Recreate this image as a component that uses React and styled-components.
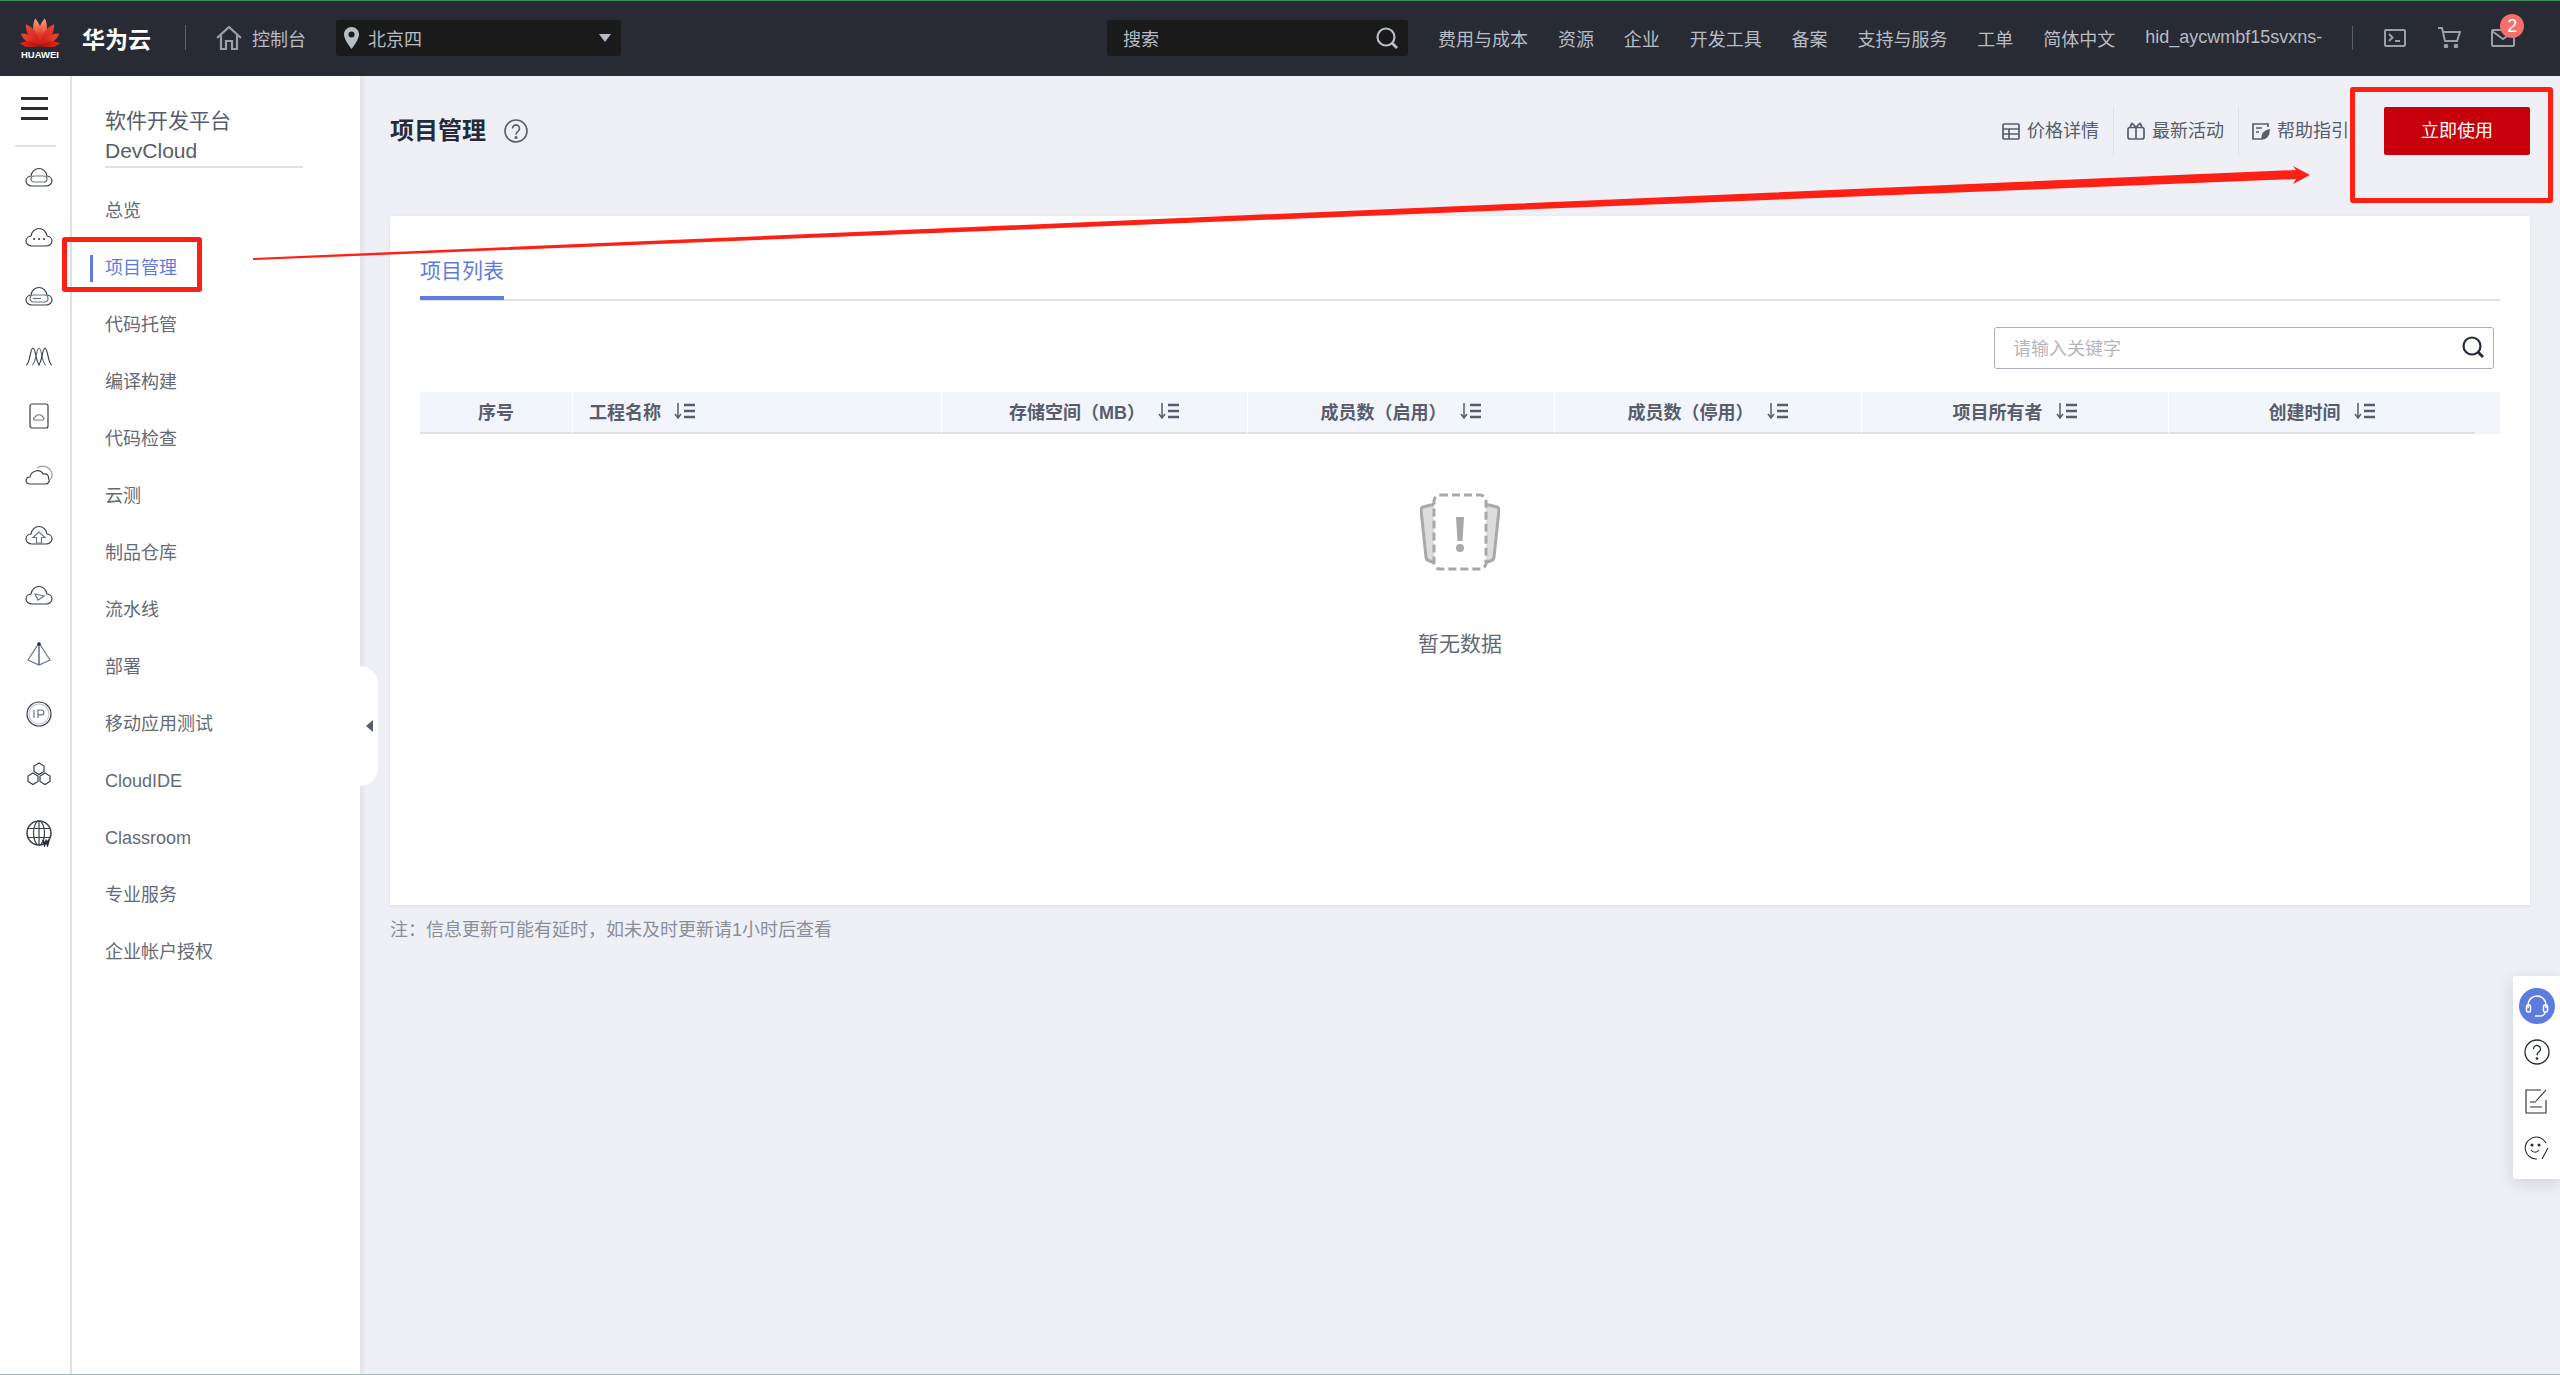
import React from "react";
import styled, { createGlobalStyle } from "styled-components";

const Global = createGlobalStyle`
  html, body { margin: 0; padding: 0; }
  body {
    font-family: "Liberation Sans", "Noto Sans CJK SC", sans-serif;
    font-size: 18px;
    color: #575d6c;
    background: #eef0f5;
    overflow: hidden;
  }
  * { box-sizing: border-box; }
`;

const Page = styled.div`
  position: relative;
  width: 2560px;
  height: 1375px;
  display: flex;
  flex-direction: column;
  overflow: hidden;
  border-bottom: 1px solid #a9b6bc;
`;

/* ---------- top bar ---------- */
const TopBar = styled.header`
  flex: none;
  height: 76px;
  display: flex;
  align-items: center;
  background: #282b33;
  border-top: 1px solid #3d8a5c;
  padding: 0 0 2px 20px;
  color: #b8bcc4;
`;
const LogoBox = styled.div`
  width: 40px;
  display: flex;
  flex-direction: column;
  align-items: center;
  margin-top: 2px;
`;
const LogoWord = styled.span`
  color: #fff;
  font-size: 9.5px;
  font-weight: 700;
  line-height: 10px;
  margin-top: 3px;
`;
const Brand = styled.span`
  margin-left: 22px;
  width: 101px;
  color: #fff;
  font-size: 23px;
  font-weight: 700;
`;
const VLine = styled.i`
  display: block;
  width: 1px;
  height: ${(p) => p.$h || 24}px;
  background: ${(p) => p.$c || "#5a5e68"};
  margin-left: ${(p) => p.$ml || 0}px;
`;
const HomeLink = styled.div`
  display: flex;
  align-items: center;
  margin-left: 30px;
  gap: 10px;
  font-size: 18px;
`;
const DarkField = styled.div`
  height: 36px;
  width: ${(p) => p.$w}px;
  margin-left: ${(p) => p.$ml}px;
  display: flex;
  align-items: center;
  background: #1a1a1a;
  border-radius: 3px;
  padding: 0 ${(p) => p.$pr ?? 8}px 0 ${(p) => p.$pl}px;
  font-size: 18px;
`;
const FieldText = styled.span`
  flex: 1;
  margin-left: ${(p) => p.$ml || 0}px;
`;
const Caret = styled.i`
  width: 0;
  height: 0;
  margin-right: 2px;
  border-left: 6px solid transparent;
  border-right: 6px solid transparent;
  border-top: 8px solid #b8bcc4;
`;
const TopNav = styled.nav`
  display: flex;
  align-items: center;
  gap: 29.9px;
  margin-left: 30px;
  font-size: 18px;
  white-space: nowrap;
`;
const TopIcons = styled.div`
  display: flex;
  align-items: center;
  margin-left: 30px;
`;
const TopIcon = styled.span`
  position: relative;
  display: flex;
  margin-left: ${(p) => p.$ml}px;
`;
const Badge = styled.b`
  position: absolute;
  left: 9px;
  top: -15px;
  width: 24px;
  height: 24px;
  border-radius: 50%;
  background: #f66f6a;
  color: #fff;
  font-size: 18px;
  font-weight: 400;
  line-height: 24px;
  text-align: center;
`;

/* ---------- body ---------- */
const Body = styled.div`
  flex: 1;
  display: flex;
  min-height: 0;
`;
const Rail = styled.aside`
  flex: none;
  width: 72px;
  background: #fff;
  border-right: 2px solid #dfe1e6;
  display: flex;
  flex-direction: column;
  padding-top: 21px;
`;
const Burger = styled.div`
  width: 27px;
  height: 23px;
  margin-left: 21px;
  border-top: 3px solid #282b33;
  border-bottom: 3px solid #282b33;
  position: relative;
  &::after {
    content: "";
    position: absolute;
    left: 0;
    right: 0;
    top: 7px;
    height: 3px;
    background: #282b33;
  }
`;
const RailRule = styled.div`
  width: 41px;
  height: 2px;
  margin: 25px 0 0 15px;
  background: #dfe1e6;
`;
const RailCell = styled.div`
  height: 59.7px;
  display: flex;
  align-items: center;
  justify-content: center;
  padding-left: 8px;
`;

const Panel = styled.aside`
  position: relative;
  flex: none;
  width: 288px;
  background: #fff;
  padding: 30px 0 0 33px;
  box-shadow: 3px 0 5px rgba(37, 43, 58, 0.07);
`;
const PanelTitle = styled.div`
  width: 198px;
  height: 62px;
  border-bottom: 2px solid #dfe1e6;
  color: #575d6c;
  font-size: 21px;
  line-height: 30px;
  margin-bottom: 15px;
`;
const SideItem = styled.div`
  position: relative;
  height: 57px;
  line-height: 57px;
  font-size: 18px;
  color: ${(p) => (p.$active ? "#5e7ce0" : "#666a75")};
  &::before {
    content: ${(p) => (p.$active ? '""' : "none")};
    position: absolute;
    left: -15px;
    top: 15px;
    width: 3px;
    height: 27px;
    background: #5e7ce0;
  }
`;
const Toggle = styled.div`
  position: absolute;
  right: -18px;
  top: 590px;
  width: 18px;
  height: 120px;
  background: #fff;
  border-radius: 0 18px 18px 0;
  display: flex;
  align-items: center;
  padding-left: 6px;
  &::before {
    content: "";
    border-top: 6px solid transparent;
    border-bottom: 6px solid transparent;
    border-right: 7px solid #575d6c;
  }
`;

const Main = styled.main`
  flex: 1;
  min-width: 0;
  padding: 0 30px;
`;
const TitleRow = styled.div`
  height: 140px;
  display: flex;
  align-items: flex-start;
  padding-top: 30px;
`;
const PageTitle = styled.h1`
  margin: 1px 0 0;
  height: 48px;
  line-height: 48px;
  font-size: 24px;
  font-weight: 700;
  color: #252b3a;
`;
const HelpIcon = styled.span`
  display: flex;
  margin: 13px 0 0 18px;
`;
const Links = styled.div`
  margin-left: auto;
  display: flex;
  align-items: center;
  height: 50px;
`;
const LinkItem = styled.div`
  display: flex;
  align-items: center;
  gap: 6px;
  height: 50px;
  padding: 0 ${(p) => p.$pr ?? 14}px 0 12px;
  font-size: 18px;
  line-height: 24px;
  color: #575d6c;
  white-space: nowrap;
  border-right: ${(p) => (p.$last ? "none" : "1px solid #dfe1e6")};
`;
const UseButton = styled.div`
  width: 146px;
  height: 48px;
  margin-left: 35px;
  background: #c7000b;
  border-radius: 2px;
  color: #fff;
  font-size: 18px;
  line-height: 48px;
  text-align: center;
`;

const Card = styled.section`
  height: 689px;
  background: #fff;
  padding: 28px 30px 0;
  box-shadow: 0 1px 3px rgba(37, 43, 58, 0.08);
`;
const Tabs = styled.div`
  height: 57px;
  border-bottom: 2px solid #dfe1e6;
`;
const Tab = styled.div`
  display: inline-block;
  height: 56px;
  padding-top: 9px;
  border-bottom: 4px solid #5e7ce0;
  color: #5e7ce0;
  font-size: 21px;
  line-height: 36px;
`;
const SearchRow = styled.div`
  display: flex;
  justify-content: flex-end;
  padding: 26px 6px 23px 0;
`;
const SearchBox = styled.div`
  width: 500px;
  height: 42px;
  display: flex;
  align-items: center;
  justify-content: space-between;
  padding: 0 9px 2px 18px;
  border: 1px solid #adb0b8;
  border-radius: 3px;
  color: #b4b6bd;
  font-size: 18px;
`;
const TableHead = styled.div`
  display: grid;
  grid-template-columns: 152px 369px 306px 307px 307px 307px 307px 25px;
  height: 42px;
  background: #f2f5fc;
`;
const HeadCell = styled.div`
  display: flex;
  align-items: center;
  justify-content: ${(p) => (p.$left ? "flex-start" : "center")};
  gap: 13px;
  padding-left: ${(p) => (p.$left ? 16 : 0)}px;
  padding-bottom: 2px;
  border-bottom: 2px solid #dfe1e6;
  border-left: ${(p) => (p.$first ? "none" : "1px solid #fff")};
  color: #575d6c;
  font-size: 18px;
  font-weight: 700;
  white-space: nowrap;
`;
const Gutter = styled.div``;
const Empty = styled.div`
  display: flex;
  flex-direction: column;
  align-items: center;
  padding-top: 59px;
`;
const EmptyText = styled.div`
  margin-top: 58px;
  color: #666a75;
  font-size: 21px;
  line-height: 30px;
`;
const Note = styled.p`
  margin: 13px 0 0;
  color: #8a8e99;
  font-size: 18px;
  line-height: 24px;
`;

/* ---------- things lying over the page ---------- */
const FloatBar = styled.div`
  position: absolute;
  right: 0;
  top: 976px;
  width: 47px;
  height: 203px;
  background: #fff;
  border-radius: 3px 0 0 3px;
  box-shadow: 0 4px 16px rgba(37, 43, 58, 0.15);
  display: flex;
  flex-direction: column;
  align-items: center;
  padding: 12px 0 0 1px;
`;
const FloatCell = styled.div`
  height: ${(p) => p.$h}px;
  display: flex;
  align-items: center;
  justify-content: center;
`;
const HeadsetDot = styled.span`
  width: 36px;
  height: 36px;
  border-radius: 50%;
  background: #5e7ce0;
  display: flex;
  align-items: center;
  justify-content: center;
`;
const RedBox = styled.div`
  position: absolute;
  left: ${(p) => p.$x}px;
  top: ${(p) => p.$y}px;
  width: ${(p) => p.$w}px;
  height: ${(p) => p.$h}px;
  border: 5px solid #fe2015;
  border-radius: 3px;
  pointer-events: none;
`;
const ArrowLayer = styled.svg`
  position: absolute;
  left: 0;
  top: 0;
  pointer-events: none;
`;

/* ---------- drawings ---------- */
const HuaweiLogo = () => {
  const petals = [
    { a: 10, l: 28, w: 5.4, c: "url(#hwTop)" },
    { a: 33, l: 26, w: 5.2, c: "url(#hwMid)" },
    { a: 57, l: 23, w: 4.8, c: "url(#hwMid)" },
    { a: 82, l: 20, w: 4, c: "url(#hwLow)" },
  ];
  return (
    <svg width="40" height="30" viewBox="-20 -29 40 30">
      <defs>
        <linearGradient id="hwTop" x1="0" y1="0" x2="0" y2="1">
          <stop offset="0" stopColor="#f6a888" />
          <stop offset="0.6" stopColor="#e8392a" />
          <stop offset="1" stopColor="#c8170f" />
        </linearGradient>
        <linearGradient id="hwMid" x1="0" y1="0" x2="0" y2="1">
          <stop offset="0" stopColor="#ee4a34" />
          <stop offset="1" stopColor="#c8170f" />
        </linearGradient>
        <linearGradient id="hwLow" x1="0" y1="0" x2="0" y2="1">
          <stop offset="0" stopColor="#e5281e" />
          <stop offset="1" stopColor="#a5130e" />
        </linearGradient>
      </defs>
      {[1, -1].map((side) =>
        petals.map((p) => (
          <path
            key={`${side}${p.a}`}
            d={`M0 0 C${-p.w} ${-p.l * 0.35} ${-p.w} ${-p.l * 0.72} 0 ${-p.l} C${p.w} ${-p.l * 0.72} ${p.w} ${-p.l * 0.35} 0 0Z`}
            fill={p.c}
            transform={`rotate(${side * p.a})`}
          />
        ))
      )}
    </svg>
  );
};

const CLOUD = "M7 21C3.6 21 1 18.8 1 16c0-2.700 2.200-4.800 5-5 .6-4.400 4-7.500 8-7.500s7.400 3.100 8 7.500c2.800.2 5 2.300 5 5 0 2.800-2.600 5-6 5H7Z";

const RailIcon = ({ children, w = 28, h = 24 }) => (
  <svg width={w} height={h} viewBox={`0 0 ${w} ${h}`} fill="none" stroke="#3a3f4c" strokeWidth="1.2">
    {children}
  </svg>
);

const railIcons = [
  <RailIcon key="1"><path d={CLOUD} /><rect x="6" y="11" width="16" height="6" rx="3" stroke="#6d7486" /></RailIcon>,
  <RailIcon key="2"><path d={CLOUD} /><path d="M9 14h.1M14 14h.1M19 14h.1" strokeWidth="2" strokeLinecap="round" /></RailIcon>,
  <RailIcon key="3"><path d={CLOUD} /><rect x="5" y="11" width="18" height="7" rx="3.500" stroke="#6d7486" /><path d="M8 14.500h8" stroke="#6d7486" /></RailIcon>,
  <RailIcon key="4"><path d="M1 21C5 21 5 4 8 4s3 17 7 17" /><path d="M7 21c4 0 4-17 7-17s3 17 7 17" stroke="#6d7486" /><path d="M13 21c4 0 4-17 7-17s3 17 7 17" /></RailIcon>,
  <RailIcon key="5" h={28}><rect x="5" y="2" width="18" height="24" rx="2" /><path d="M10 18c-2 0-2-3 .5-3 .5-3 6.500-3 7 0 2 0 2 3 0 3h-7.500Z" stroke="#6d7486" /></RailIcon>,
  <RailIcon key="6"><path d="M5 21c-5.500 0-5-7 0-7 1-6 10-9 13-3 4-1 6 2 5.500 4.500 2 3-.5 5.500-3 5.500H5Z" /><path d="M12 5c5-4 14-1 15 6 .5 3-1 5-3 6" stroke="#9aa0ad" /></RailIcon>,
  <RailIcon key="7"><path d={CLOUD} /><path d="M14 9l-6 5.500h3.500V20h5v-5.500H20L14 9Z" stroke="#6d7486" /></RailIcon>,
  <RailIcon key="8"><path d={CLOUD} /><path d="M10 11l9 2-6 4-3-6Z" stroke="#6d7486" /></RailIcon>,
  <RailIcon key="9" h={26}><path d="M14 2 3 19l11 5 11-5L14 2Z" stroke="#6d7486" /><path d="M14 3v21" stroke="#56627e" strokeWidth="1.400" /><circle cx="14" cy="3" r="1.800" fill="#252b3a" stroke="none" /></RailIcon>,
  <RailIcon key="10" h={26}><circle cx="14" cy="13" r="12" /><circle cx="14" cy="13" r="10" stroke="#c2c6d0" /><path d="M9 9v8M13 17V9h3.500a2.300 2.300 0 0 1 0 4.800H13" stroke="#6d7486" /></RailIcon>,
  <RailIcon key="11" h={26}><path d="M14 2l5 3v5.500l-5 3-5-3V5l5-3ZM8 12l5 3v5.500l-5 3-5-3V15l5-3ZM20 12l5 3v5.500l-5 3-5-3V15l5-3Z" /></RailIcon>,
  <RailIcon key="12" h={28}><circle cx="14" cy="14" r="12" strokeWidth="1.500" /><ellipse cx="14" cy="14" rx="5.500" ry="12" /><path d="M3 9.500h22M3 18.500h22M14 2v24" /><path d="M18 21l1.500 5 1.500-4 1.500 4 1.500-5" stroke="#252b3a" strokeWidth="1.800" /></RailIcon>,
];

const SortIcon = () => (
  <svg width="22" height="18" viewBox="0 0 22 18" fill="none" stroke="#575d6c" strokeWidth="2.600">
    <path d="M4 1v15M1 12l3 4 3-4" strokeWidth="1.500" />
    <path d="M10 3h11M10 9h11M10 15h11" />
  </svg>
);

const SearchGlyph = ({ size = 22, color = "#252b3a" }) => (
  <svg width={size} height={size} viewBox="0 0 22 22" fill="none" stroke={color} strokeWidth="2.200">
    <circle cx="10" cy="10" r="8.500" />
    <path d="M16 16l5 5" strokeWidth="2.800" />
  </svg>
);

const EmptyIcon = () => (
  <svg width="80" height="78" viewBox="0 0 80 78" fill="none">
    <path d="M15 11 3 14c-1 .3-2 1.500-2 3l5 47c.2 2 1.500 3.500 3.500 4L15 70" fill="#dcdcdc" stroke="#a8a8a8" strokeWidth="3" />
    <path d="M65 11l12 3c1 .3 2 1.500 2 3l-5 47c-.2 2-1.500 3.500-3.500 4L65 70" fill="#dcdcdc" stroke="#a8a8a8" strokeWidth="3" />
    <rect x="14" y="2" width="52" height="74" rx="6" fill="#fff" stroke="#a8a8a8" strokeWidth="3" strokeDasharray="8 4" />
    <path d="M36 24h8L42.500 48h-5Z" fill="#a8a8a8" />
    <circle cx="40" cy="55" r="4" fill="#a8a8a8" />
  </svg>
);

const sideItems = ["总览", "项目管理", "代码托管", "编译构建", "代码检查", "云测", "制品仓库", "流水线", "部署", "移动应用测试", "CloudIDE", "Classroom", "专业服务", "企业帐户授权"];
const topNav = ["费用与成本", "资源", "企业", "开发工具", "备案", "支持与服务", "工单", "简体中文", "hid_aycwmbf15svxns-"];
const columns = ["序号", "工程名称", "存储空间（MB）", "成员数（启用）", "成员数（停用）", "项目所有者", "创建时间"];

const App = () => (
  <Page>
    <Global />
    <TopBar>
      <LogoBox>
        <HuaweiLogo />
        <LogoWord>HUAWEI</LogoWord>
      </LogoBox>
      <Brand>华为云</Brand>
      <VLine $ml={2} $h={25} />
      <HomeLink>
        <svg width="26" height="24" viewBox="0 0 26 24" fill="none" stroke="#9aa0a8" strokeWidth="2.200">
          <path d="M1 12 13 1l12 11M5 9v14h5v-8h6v8h5V9" />
        </svg>
        控制台
      </HomeLink>
      <DarkField $w={285} $ml={30} $pl={8}>
        <svg width="15" height="22" viewBox="0 0 15 22">
          <path d="M7.500 0C3.400 0 0 3.300 0 7.500 0 13 7.500 22 7.500 22S15 13 15 7.500C15 3.300 11.600 0 7.500 0Z" fill="#b8bcc4" />
          <circle cx="7.500" cy="7.500" r="3" fill="#1a1a1a" />
        </svg>
        <FieldText $ml={9}>北京四</FieldText>
        <Caret />
      </DarkField>
      <DarkField $w={301} $ml={486} $pl={16} $pr={10}>
        <FieldText>搜索</FieldText>
        <SearchGlyph color="#b8bcc4" />
      </DarkField>
      <TopNav>
        {topNav.map((t) => (
          <span key={t}>{t}</span>
        ))}
      </TopNav>
      <TopIcons>
        <VLine $h={24} />
        <TopIcon $ml={31}>
          <svg width="22" height="18" viewBox="0 0 22 18" fill="none" stroke="#9aa0a8" strokeWidth="2">
            <rect x="1" y="1" width="20" height="16" rx="1" />
            <path d="M5 5l3.500 3.500L5 12M11 12h5" />
          </svg>
        </TopIcon>
        <TopIcon $ml={31}>
          <svg width="24" height="21" viewBox="0 0 24 21" fill="none" stroke="#9aa0a8" strokeWidth="2">
            <path d="M1 1h4l3 13h12l3-9H6" />
            <circle cx="9" cy="19" r="1.300" fill="#9aa0a8" />
            <circle cx="19" cy="19" r="1.300" fill="#9aa0a8" />
          </svg>
        </TopIcon>
        <TopIcon $ml={30}>
          <svg width="24" height="18" viewBox="0 0 24 18" fill="none" stroke="#9aa0a8" strokeWidth="2">
            <rect x="1" y="1" width="22" height="16" rx="1" />
            <path d="M1 2l11 8 11-8" />
          </svg>
          <Badge>2</Badge>
        </TopIcon>
      </TopIcons>
    </TopBar>

    <Body>
      <Rail>
        <Burger />
        <RailRule />
        {railIcons.map((icon, i) => (
          <RailCell key={i}>{icon}</RailCell>
        ))}
      </Rail>
      <Panel>
        <PanelTitle>
          软件开发平台
          <br />
          DevCloud
        </PanelTitle>
        {sideItems.map((t) => (
          <SideItem key={t} $active={t === "项目管理"}>
            {t}
          </SideItem>
        ))}
        <Toggle />
      </Panel>
      <Main>
        <TitleRow>
          <PageTitle>项目管理</PageTitle>
          <HelpIcon>
            <svg width="24" height="24" viewBox="0 0 24 24" fill="none" stroke="#575d6c" strokeWidth="1.600">
              <circle cx="12" cy="12" r="11" />
              <path d="M8.500 9.500a3.500 3.500 0 1 1 5.500 2.800c-1.300.9-2 1.500-2 3.200" />
              <circle cx="12" cy="18.500" r=".8" fill="#575d6c" />
            </svg>
          </HelpIcon>
          <Links>
            <LinkItem>
              <svg width="20" height="17" viewBox="0 0 20 17" fill="none" stroke="#575d6c" strokeWidth="1.700">
                <rect x="2" y="1" width="16" height="15" rx="1" />
                <path d="M2 6h16M2 11h16M8 6v10" />
              </svg>
              价格详情
            </LinkItem>
            <LinkItem>
              <svg width="20" height="18" viewBox="0 0 20 18" fill="none" stroke="#575d6c" strokeWidth="1.700">
                <rect x="2" y="5.500" width="16" height="11.500" rx="2" />
                <path d="M10 5.500V17M10 5.500 6 1M10 5.500 14 1M6 1 4 5M14 1l2 4" />
              </svg>
              最新活动
            </LinkItem>
            <LinkItem $last $pr={0}>
              <svg width="20" height="18" viewBox="0 0 20 18" fill="none" stroke="#575d6c" strokeWidth="1.700">
                <path d="M17 5V2H2v15h8M5 6h6M5 10h3" />
                <path d="M11 17c0-5 3-8 7-9 0 5-2 8-7 9Z" fill="#575d6c" />
              </svg>
              帮助指引
            </LinkItem>
            <UseButton>立即使用</UseButton>
          </Links>
        </TitleRow>
        <Card>
          <Tabs>
            <Tab>项目列表</Tab>
          </Tabs>
          <SearchRow>
            <SearchBox>
              请输入关键字
              <SearchGlyph />
            </SearchBox>
          </SearchRow>
          <TableHead>
            {columns.map((c, i) => (
              <HeadCell key={c} $first={i === 0} $left={i === 1}>
                {c}
                {i > 0 && <SortIcon />}
              </HeadCell>
            ))}
            <Gutter />
          </TableHead>
          <Empty>
            <EmptyIcon />
            <EmptyText>暂无数据</EmptyText>
          </Empty>
        </Card>
        <Note>注：信息更新可能有延时，如未及时更新请1小时后查看</Note>
      </Main>
    </Body>

    <FloatBar>
      <FloatCell $h={36}>
        <HeadsetDot>
          <svg width="24" height="24" viewBox="0 0 24 24" fill="none" stroke="#fff" strokeWidth="1.500">
            <path d="M3 14v-3a9 9 0 0 1 18 0v3" />
            <rect x="1.500" y="11" width="4" height="7" rx="1.500" />
            <rect x="18.500" y="11" width="4" height="7" rx="1.500" />
            <path d="M20 18c0 3-3 4-5 4h-5" />
          </svg>
        </HeadsetDot>
      </FloatCell>
      <FloatCell $h={56}>
        <svg width="26" height="26" viewBox="0 0 26 26" fill="none" stroke="#252b3a" strokeWidth="1.300">
          <circle cx="13" cy="13" r="12" />
          <path d="M9.500 10a3.500 3.500 0 1 1 5.500 2.800c-1.300.9-2 1.700-2 3.400" />
          <circle cx="13" cy="19.500" r=".7" fill="#252b3a" />
        </svg>
      </FloatCell>
      <FloatCell $h={43}>
        <svg width="24" height="25" viewBox="0 0 24 25" fill="none" stroke="#252b3a" strokeWidth="1.100">
          <path d="M16 1H1v23h20V11" />
          <path d="M11 12 21 1M5 13h6M5 18h12" />
        </svg>
      </FloatCell>
      <FloatCell $h={50}>
        <svg width="26" height="24" viewBox="0 0 26 24" fill="none" stroke="#252b3a" strokeWidth="1.100">
          <path d="M22 7A11 11 0 1 0 13 23" />
          <path d="M7 14c2 3 6 3 8 0M18 23l6-11" />
          <circle cx="8" cy="9" r="1" fill="#252b3a" />
          <circle cx="15" cy="9" r="1" fill="#252b3a" />
        </svg>
      </FloatCell>
    </FloatBar>

    <RedBox $x={62} $y={237} $w={140} $h={55} />
    <RedBox $x={2350} $y={87} $w={203} $h={116} />
    <ArrowLayer width="2560" height="1375">
      <polygon points="253,258 2296,170 2293,166 2310,175 2293,184 2296,179 253,260" fill="#fe2015" />
    </ArrowLayer>
  </Page>
);

export default App;
